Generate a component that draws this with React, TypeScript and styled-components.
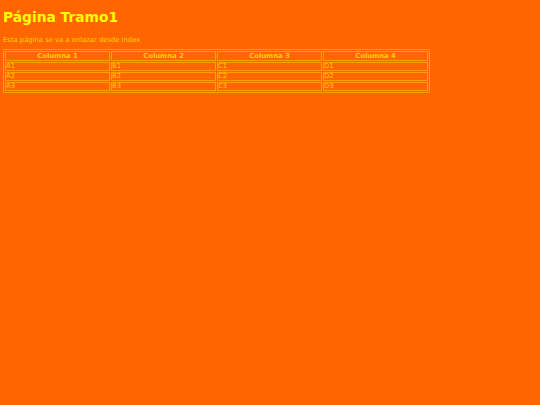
import React from "react";
import styled, { createGlobalStyle } from "styled-components";

const Global = createGlobalStyle`
  html, body { margin: 0; padding: 0; background: #ff6600; }
  body { font-family: "DejaVu Sans", Verdana, sans-serif; }
`;

const Page = styled.div`
  padding: 9px 3px 0 3px;
  display: flex;
  flex-direction: column;
  align-items: flex-start;
`;

const Title = styled.h1`
  margin: 0;
  font-size: 13.8px;
  font-weight: bold;
  color: #ffff00;
  line-height: 17px;
`;

const Intro = styled.p`
  margin: 10px 0 0 0;
  font-size: 6.8px;
  line-height: 9px;
  color: #ffd000;
`;

const Table = styled.table`
  margin-top: 4px;
  width: 427px;
  border: 1px solid #ffa000;
  border-spacing: 1px;
  table-layout: fixed;
`;

const Th = styled.th`
  border: 1px solid #ffa000;
  font-size: 6.8px;
  font-weight: bold;
  color: #ffd000;
  height: 8px;
  padding: 0;
  text-align: center;
  line-height: 8px;
`;

const Td = styled.td`
  border: 1px solid #ffa000;
  font-size: 6.8px;
  color: #ffd000;
  padding: 0;
  line-height: 7px;
  height: 7px;
`;

const rows = [
  ["A1", "B1", "C1", "D1"],
  ["A2", "B2", "C2", "D2"],
  ["A3", "B3", "C3", "D3"],
];

export default function App() {
  return (
    <>
      <Global />
      <Page>
        <Title>Página Tramo1</Title>
        <Intro>Esta página se va a enlazar desde index</Intro>
        <Table>
          <thead>
            <tr>
              <Th>Columna 1</Th>
              <Th>Columna 2</Th>
              <Th>Columna 3</Th>
              <Th>Columna 4</Th>
            </tr>
          </thead>
          <tbody>
            {rows.map((r) => (
              <tr key={r[0]}>
                {r.map((c) => (
                  <Td key={c}>{c}</Td>
                ))}
              </tr>
            ))}
          </tbody>
        </Table>
      </Page>
    </>
  );
}
